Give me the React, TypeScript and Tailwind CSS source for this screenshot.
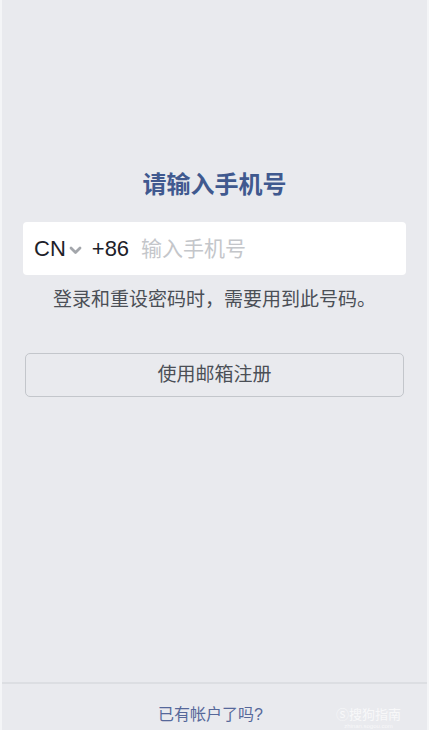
const font = { fontFamily: '"Liberation Sans", "Noto Sans CJK SC", sans-serif' };

function Chevron() {
  return (
    <svg width="13" height="9" viewBox="0 0 13 9" className="mt-[3px]">
      <path d="M2 2 L6.5 6.5 L11 2" fill="none" stroke="#a3a6ab" strokeWidth="2.8" strokeLinecap="round" strokeLinejoin="round" />
    </svg>
  );
}

export default function App() {
  return (
    <div className="h-[730px] w-[429px] bg-[#f4f5f7] px-[2px] overflow-hidden" style={font}>
      <div className="flex h-full flex-col bg-[#e9eaee]">
        <div className="pt-[169px] flex flex-col">
          <h1 className="text-center text-[24px] leading-[32px] font-semibold text-[#40598f]">请输入手机号</h1>

          <div className="mx-[21px] mt-[21px] flex h-[53px] items-center rounded-[4px] bg-white pl-[11px]">
            <span className="text-[22px] text-[#1d2129]">CN</span>
            <span className="ml-[3px]"><Chevron /></span>
            <span className="ml-[10px] text-[22px] text-[#1d2129]">+86</span>
            <span className="ml-[12px] text-[21px] text-[#c4c6ca]">输入手机号</span>
          </div>

          <p className="mt-[13px] text-center text-[19px] leading-[24px] text-[#4b4f56]">
            登录和重设密码时，需要用到此号码。
          </p>

          <button className="mx-[23px] mt-[41px] h-[44px] rounded-[5px] border border-[#c3c6cb] text-center text-[19px] text-[#4b4f56]">
            使用邮箱注册
          </button>
        </div>

        <div className="flex-1" />

        <div className="relative h-[48px] border-t-2 border-[#dcdee2]">
          <p className="pt-[21px] pr-[8px] text-center text-[16px] leading-[20px] text-[#56689a]">已有帐户了吗?</p>
          <div className="absolute right-[26px] top-[24px] flex flex-col items-center text-white/70">
            <span className="text-[13px] leading-[14px]">Ⓢ搜狗指南</span>
            <span className="text-[6px] leading-[8px]">zhinan.sogou.com</span>
          </div>
        </div>
      </div>
    </div>
  );
}
